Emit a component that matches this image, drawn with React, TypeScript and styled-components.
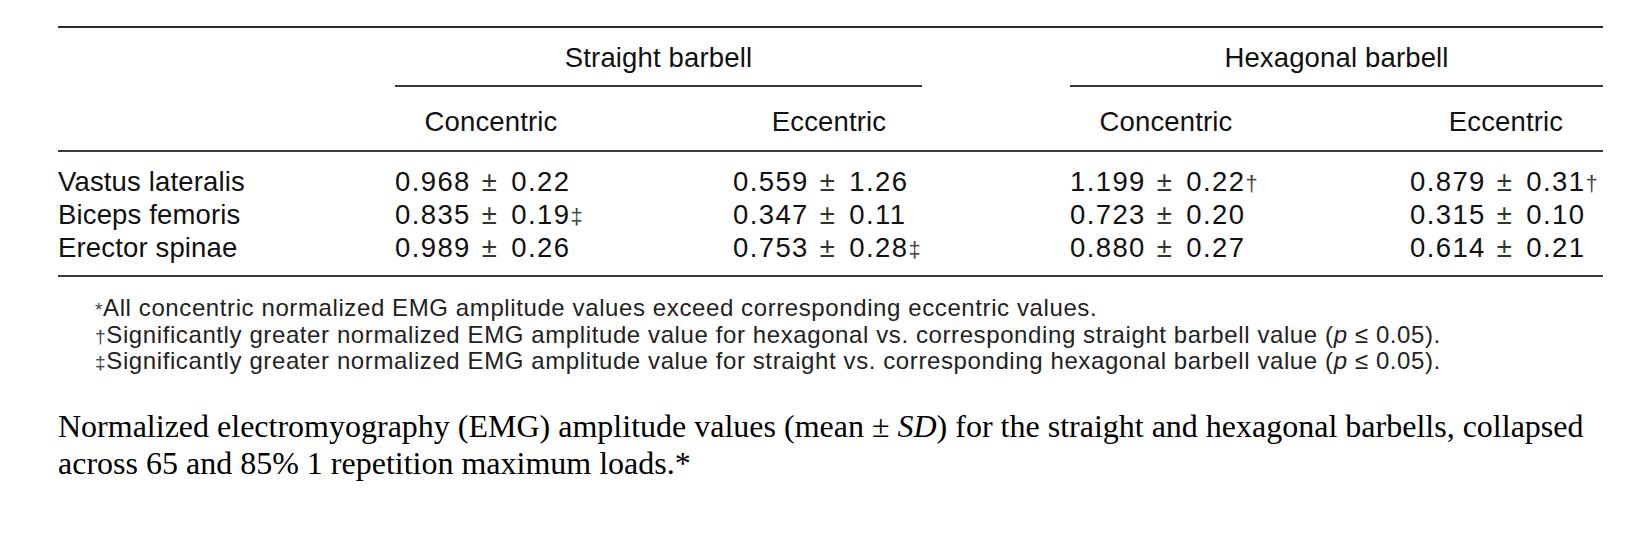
import React from "react";
import styled, { createGlobalStyle } from "styled-components";

const Global = createGlobalStyle`
  html, body { margin: 0; padding: 0; background: #ffffff; }
  body { width: 1648px; height: 548px; overflow: hidden; }
`;

const COLS = "337px 338px 189px 148px 340px 193px";

const Page = styled.div`
  padding: 26px 0 0 58px;
  font-family: "Liberation Sans", Arial, Helvetica, sans-serif;
`;

const Table = styled.div`
  width: 1545px;
  border-top: 2px solid #2a2a2a;
  border-bottom: 2px solid #3a3a3a;
  color: #111;
  font-size: 27.5px;
  letter-spacing: 0.15px;
`;

const Row = styled.div`
  display: grid;
  grid-template-columns: ${COLS};
`;

const SubRow = styled(Row)`
  height: 63px;
  border-bottom: 2px solid #3a3a3a;
`;

const GroupHead = styled.div<{ $span: string }>`
  grid-column: ${(p) => p.$span};
  height: 59px;
  box-sizing: border-box;
  border-bottom: 2px solid #3a3a3a;
  display: flex;
  align-items: center;
  justify-content: center;
  padding-top: 2px;
`;

const SubHead = styled.div<{ $col: number }>`
  grid-column: ${(p) => p.$col};
  width: 192px;
  text-align: center;
  line-height: 63px;
  padding-top: 3px;
`;

const Body = styled.div`
  padding: 12.5px 0 11.5px;
`;

const DataRow = styled(Row)`
  height: 33px;
  line-height: 33px;
`;

const Cell = styled.div`
  white-space: nowrap;
`;

const ValueCell = styled(Cell)<{ $col: number }>`
  grid-column: ${(p) => p.$col};
  letter-spacing: 1.4px;
`;

const Pm = styled.span`
  display: inline-block;
  margin: 0 13px 0 11px;
  color: #333;
`;

const Mark = styled.span`
  font-size: 0.8em;
  color: #444;
  letter-spacing: 0;
`;

const Notes = styled.div`
  margin: 19px 0 0 37px;
  font-size: 24px;
  letter-spacing: 0.6px;
  line-height: 24.5px;
  color: #222;
`;

const NoteSym = styled.span`
  font-size: 0.8em;
  color: #444;
`;

const Caption = styled.p`
  margin: 32px 0 0 0;
  width: 1560px;
  font-family: "Liberation Serif", "Times New Roman", serif;
  font-size: 32px;
  line-height: 37px;
  color: #000;
`;

type Val = { m: string; sd: string; mark?: string };

const rows: { label: string; vals: Val[] }[] = [
  {
    label: "Vastus lateralis",
    vals: [
      { m: "0.968", sd: "0.22" },
      { m: "0.559", sd: "1.26" },
      { m: "1.199", sd: "0.22", mark: "†" },
      { m: "0.879", sd: "0.31", mark: "†" },
    ],
  },
  {
    label: "Biceps femoris",
    vals: [
      { m: "0.835", sd: "0.19", mark: "‡" },
      { m: "0.347", sd: "0.11" },
      { m: "0.723", sd: "0.20" },
      { m: "0.315", sd: "0.10" },
    ],
  },
  {
    label: "Erector spinae",
    vals: [
      { m: "0.989", sd: "0.26" },
      { m: "0.753", sd: "0.28", mark: "‡" },
      { m: "0.880", sd: "0.27" },
      { m: "0.614", sd: "0.21" },
    ],
  },
];

const valueCols = [2, 3, 5, 6];

export default function App() {
  return (
    <>
      <Global />
      <Page>
        <Table>
          <Row>
            <GroupHead $span="2 / 4">Straight barbell</GroupHead>
            <GroupHead $span="5 / 7">Hexagonal barbell</GroupHead>
          </Row>
          <SubRow>
            <SubHead $col={2}>Concentric</SubHead>
            <SubHead $col={3}>Eccentric</SubHead>
            <SubHead $col={5}>Concentric</SubHead>
            <SubHead $col={6}>Eccentric</SubHead>
          </SubRow>
          <Body>
            {rows.map((r) => (
              <DataRow key={r.label}>
                <Cell>{r.label}</Cell>
                {r.vals.map((v, i) => (
                  <ValueCell key={i} $col={valueCols[i]}>
                    {v.m}
                    <Pm>±</Pm>
                    {v.sd}
                    {v.mark && <Mark>{v.mark}</Mark>}
                  </ValueCell>
                ))}
              </DataRow>
            ))}
          </Body>
        </Table>
        <Notes>
          <div>
            <NoteSym>*</NoteSym>All concentric normalized EMG amplitude values exceed corresponding eccentric values.
          </div>
          <div>
            <NoteSym>†</NoteSym>Significantly greater normalized EMG amplitude value for hexagonal vs. corresponding straight
            barbell value (<i>p</i> ≤ 0.05).
          </div>
          <div>
            <NoteSym>‡</NoteSym>Significantly greater normalized EMG amplitude value for straight vs. corresponding hexagonal
            barbell value (<i>p</i> ≤ 0.05).
          </div>
        </Notes>
        <Caption>
          Normalized electromyography (EMG) amplitude values (mean ± <i>SD</i>) for the straight and hexagonal barbells,
          collapsed across 65 and 85% 1 repetition maximum loads.*
        </Caption>
      </Page>
    </>
  );
}
